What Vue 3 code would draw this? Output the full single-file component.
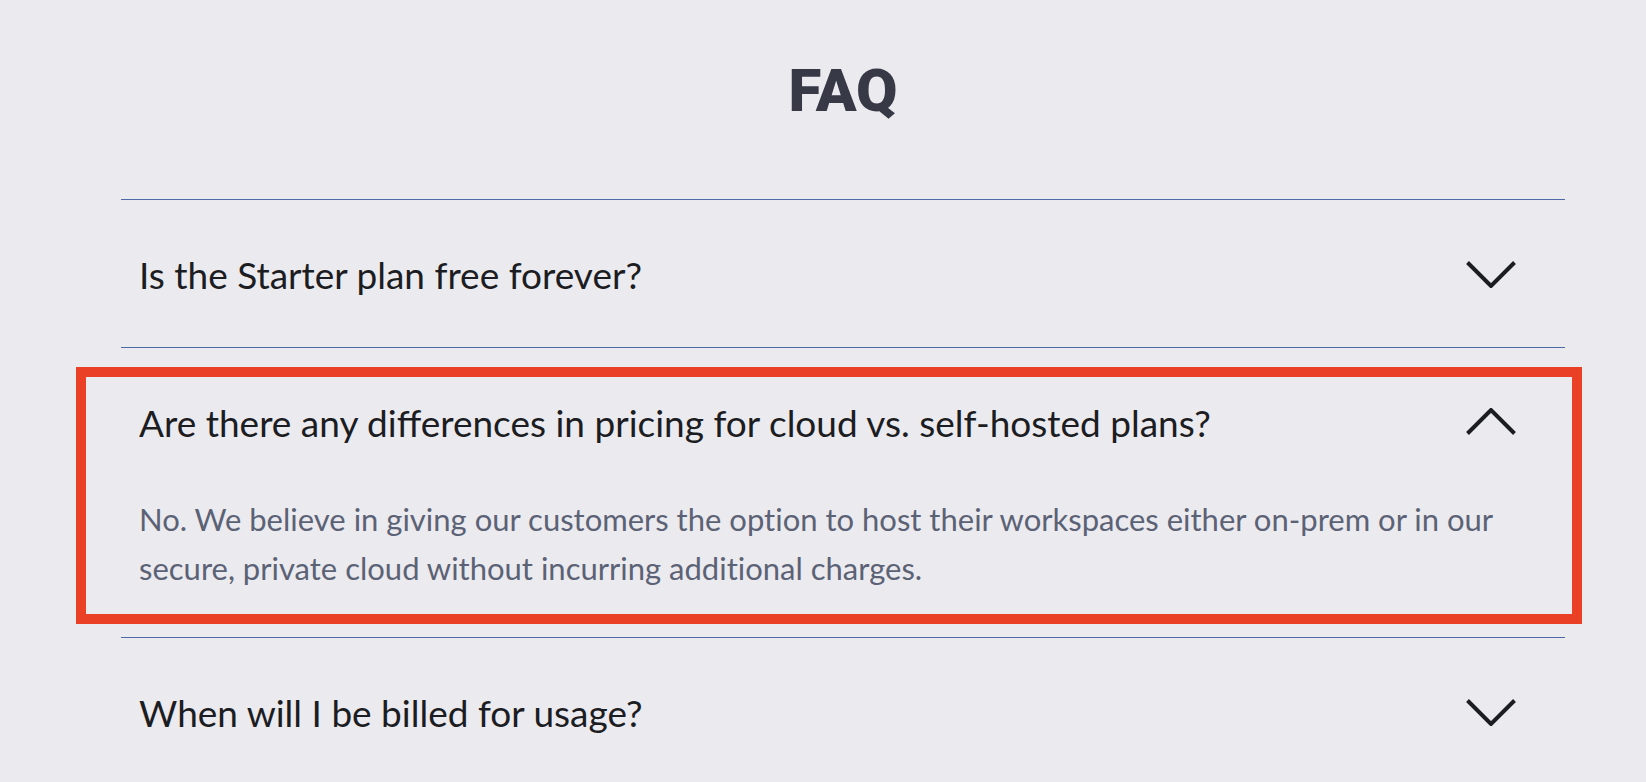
<script setup>
import { ref } from 'vue'

const items = ref([
  {
    question: 'Is the Starter plan free forever?',
    answer: '',
    open: false,
    highlighted: false
  },
  {
    question: 'Are there any differences in pricing for cloud vs. self-hosted plans?',
    answer:
      'No. We believe in giving our customers the option to host their workspaces either on-prem or in our secure, private cloud without incurring additional charges.',
    open: true,
    highlighted: true
  },
  {
    question: 'When will I be billed for usage?',
    answer: '',
    open: false,
    highlighted: false
  }
])
</script>

<template>
  <main class="page">
    <h1 class="title">FAQ</h1>
    <section class="list">
      <article v-for="(item, i) in items" :key="i" class="item">
        <h2 class="heading">
          <button
            class="toggle"
            type="button"
            :aria-expanded="item.open"
            @click="item.open = !item.open"
          >
            <span class="question">{{ item.question }}</span>
            <svg class="chevron" :class="{ up: item.open }" viewBox="0 0 52 28" aria-hidden="true">
              <path d="M2.5 2.5 L26 26 L49.5 2.5" />
            </svg>
          </button>
        </h2>
        <p v-if="item.open && item.answer" class="answer">{{ item.answer }}</p>
        <div v-if="item.highlighted" class="marker"></div>
      </article>
    </section>
  </main>
</template>

<style>
body {
  margin: 0;
  background: #ebeaef;
}
</style>

<style scoped>
.page {
  box-sizing: border-box;
  height: 100vh;
  overflow: hidden;
  padding: 55px 81px 0 121px;
  background: #ebeaef;
  font-family: Lato, "Open Sans", sans-serif;
}

.title {
  margin: 0 0 72px;
  color: #373946;
  font-family: Roboto, Lato, sans-serif;
  font-size: 60px;
  font-weight: 900;
  line-height: 72px;
  text-align: center;
}

.item {
  position: relative;
  border-top: 1px solid #4f69a8;
}

.heading {
  margin: 0;
  font-weight: 400;
}

.toggle {
  box-sizing: border-box;
  display: flex;
  align-items: center;
  justify-content: space-between;
  width: 100%;
  min-height: 147px;
  padding: 0 48px 0 18px;
  border: 0;
  background: none;
  color: #1c1d22;
  font: inherit;
  font-size: 37px;
  line-height: 48px;
  text-align: left;
  cursor: pointer;
}

.question {
  padding-top: 2px;
}

.chevron {
  flex: none;
  width: 52px;
  height: 28px;
  fill: none;
  stroke: currentColor;
  stroke-width: 4;
}

.chevron.up {
  transform: rotate(180deg);
}

.answer {
  margin: 0;
  padding: 0 48px 44px 18px;
  color: #5b6275;
  font-size: 31px;
  font-variant-ligatures: none;
  line-height: 49px;
}

/* Frame drawn over the highlighted entry */
.marker {
  position: absolute;
  inset: 19px -17px 13px -45px;
  border: 10px solid #ea4026;
  pointer-events: none;
}
</style>
